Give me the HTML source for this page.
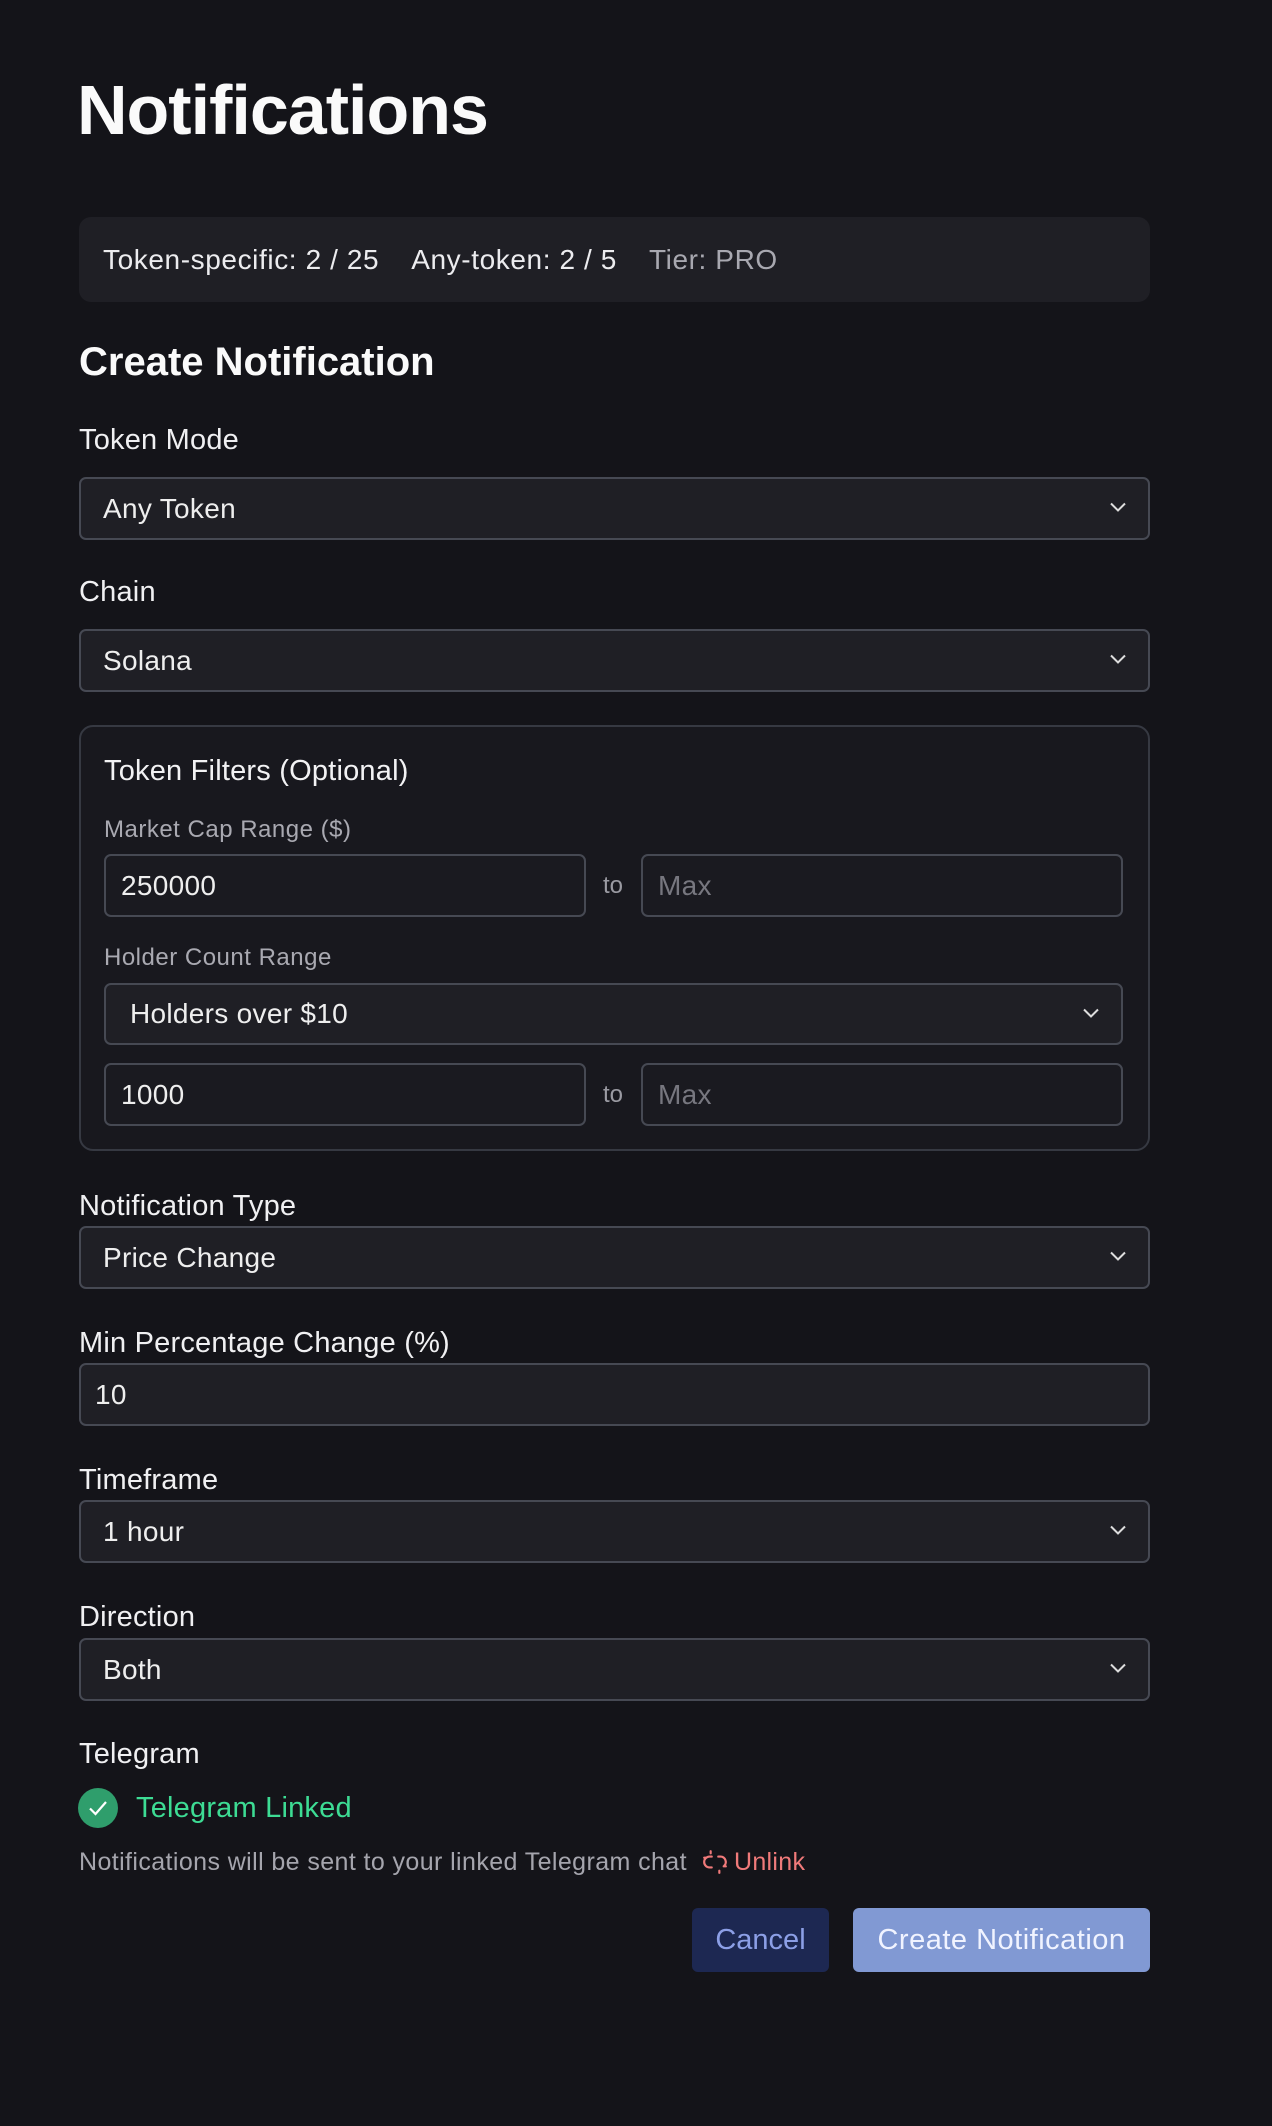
<!DOCTYPE html>
<html><head><meta charset="utf-8"><style>
*{box-sizing:border-box;margin:0;padding:0}
body{width:1272px;height:2126px;background:#141419;font-family:"Liberation Sans",sans-serif;color:#f2f2f4;position:relative;overflow:hidden}
.a{position:absolute}
.lbl{position:absolute;left:79px;font-size:29px;color:#f0f0f2;letter-spacing:0.2px}
.sel{position:absolute;left:79px;width:1071px;height:63px;background:#1f1f25;border:2px solid #464953;border-radius:7px;font-size:28px;padding-left:22px;line-height:59px;color:#eee;letter-spacing:0.3px}
.chev{position:absolute;right:22px;top:23px;width:16px;height:10px}
.inp{position:absolute;height:63px;background:#1a1a20;border:2px solid #464953;border-radius:7px;font-size:28px;padding-left:15px;line-height:59px;color:#eee;letter-spacing:0.3px}
.ph{color:#77777f}
.to{position:absolute;font-size:24px;color:#9a9aa2}
.sm{position:absolute;left:104px;font-size:24px;color:#a9a9b1;letter-spacing:0.5px}
</style></head><body>
<div class="a" style="left:77px;top:70px;font-size:70px;font-weight:700;letter-spacing:-1px;color:#fafafa">Notifications</div>
<div class="a" style="left:79px;top:217px;width:1071px;height:85px;background:#1f1f25;border-radius:12px;font-size:28px;line-height:85px;padding-left:24px;color:#ececef;letter-spacing:0.6px">Token-specific: 2 / 25<span style="margin-left:32px">Any-token: 2 / 5</span><span style="margin-left:32px;color:#a8a8b0">Tier: PRO</span></div>
<div class="a" style="left:79px;top:340px;font-size:40px;font-weight:700;color:#fafafa">Create Notification</div>

<div class="lbl" style="top:424px">Token Mode</div>
<div class="sel" style="top:477px">Any Token<svg class="chev" viewBox="0 0 16 10"><path d="M1 1.5L8 8.5L15 1.5" fill="none" stroke="#ddd" stroke-width="2"/></svg></div>
<div class="lbl" style="top:576px">Chain</div>
<div class="sel" style="top:629px">Solana<svg class="chev" viewBox="0 0 16 10"><path d="M1 1.5L8 8.5L15 1.5" fill="none" stroke="#ddd" stroke-width="2"/></svg></div>

<div class="a" style="left:79px;top:725px;width:1071px;height:426px;border:2px solid #363942;border-radius:14px;background:#18181e"></div>
<div class="a" style="left:104px;top:755px;font-size:29px;letter-spacing:0.2px">Token Filters (Optional)</div>
<div class="sm" style="top:816px">Market Cap Range ($)</div>
<div class="inp" style="left:104px;top:854px;width:482px">250000</div>
<div class="to" style="left:603px;top:872px">to</div>
<div class="inp" style="left:641px;top:854px;width:482px"><span class="ph">Max</span></div>
<div class="sm" style="top:944px">Holder Count Range</div>
<div class="sel" style="left:104px;top:983px;width:1019px;height:62px;line-height:58px;padding-left:24px">Holders over $10<svg class="chev" viewBox="0 0 16 10"><path d="M1 1.5L8 8.5L15 1.5" fill="none" stroke="#ddd" stroke-width="2"/></svg></div>
<div class="inp" style="left:104px;top:1063px;width:482px">1000</div>
<div class="to" style="left:603px;top:1081px">to</div>
<div class="inp" style="left:641px;top:1063px;width:482px"><span class="ph">Max</span></div>

<div class="lbl" style="top:1190px">Notification Type</div>
<div class="sel" style="top:1226px">Price Change<svg class="chev" viewBox="0 0 16 10"><path d="M1 1.5L8 8.5L15 1.5" fill="none" stroke="#ddd" stroke-width="2"/></svg></div>
<div class="lbl" style="top:1327px">Min Percentage Change (%)</div>
<div class="sel" style="top:1363px;padding-left:14px">10</div>
<div class="lbl" style="top:1464px">Timeframe</div>
<div class="sel" style="top:1500px">1 hour<svg class="chev" viewBox="0 0 16 10"><path d="M1 1.5L8 8.5L15 1.5" fill="none" stroke="#ddd" stroke-width="2"/></svg></div>
<div class="lbl" style="top:1601px">Direction</div>
<div class="sel" style="top:1638px">Both<svg class="chev" viewBox="0 0 16 10"><path d="M1 1.5L8 8.5L15 1.5" fill="none" stroke="#ddd" stroke-width="2"/></svg></div>

<div class="lbl" style="top:1738px">Telegram</div>
<svg class="a" style="left:78px;top:1788px" width="40" height="40" viewBox="0 0 40 40"><circle cx="20" cy="20" r="20" fill="#2f9e6c"/><path d="M12 20.5L17.5 26L28 14" fill="none" stroke="#fff" stroke-width="2.2"/></svg>
<div class="a" style="left:136px;top:1792px;font-size:29px;color:#3ddc94;letter-spacing:0.2px">Telegram Linked</div>
<div class="a" style="left:79px;top:1848px;font-size:25px;color:#a5a5ad;letter-spacing:0.4px">Notifications will be sent to your linked Telegram chat</div>
<svg class="a" style="left:702px;top:1849px" width="26" height="26" viewBox="0 0 24 24" fill="none" stroke="#f07a7a" stroke-width="2" stroke-linecap="round"><path d="M9 17H7a5 5 0 0 1 0-10h2M15 7h2a5 5 0 0 1 3.5 8.5"/><path d="M8 2v2M16 20v2M2 8h2M20 16h2"/></svg>
<div class="a" style="left:734px;top:1848px;font-size:25px;color:#f07a7a;letter-spacing:0.3px">Unlink</div>

<div class="a" style="left:692px;top:1908px;width:137px;height:64px;background:#1d2852;border-radius:6px;color:#8c9fe6;font-size:29px;line-height:64px;text-align:center">Cancel</div>
<div class="a" style="left:853px;top:1908px;width:297px;height:64px;background:#8199d3;border-radius:6px;color:#f0f3ff;font-size:29px;line-height:64px;text-align:center;letter-spacing:0.5px">Create Notification</div>
</body></html>
